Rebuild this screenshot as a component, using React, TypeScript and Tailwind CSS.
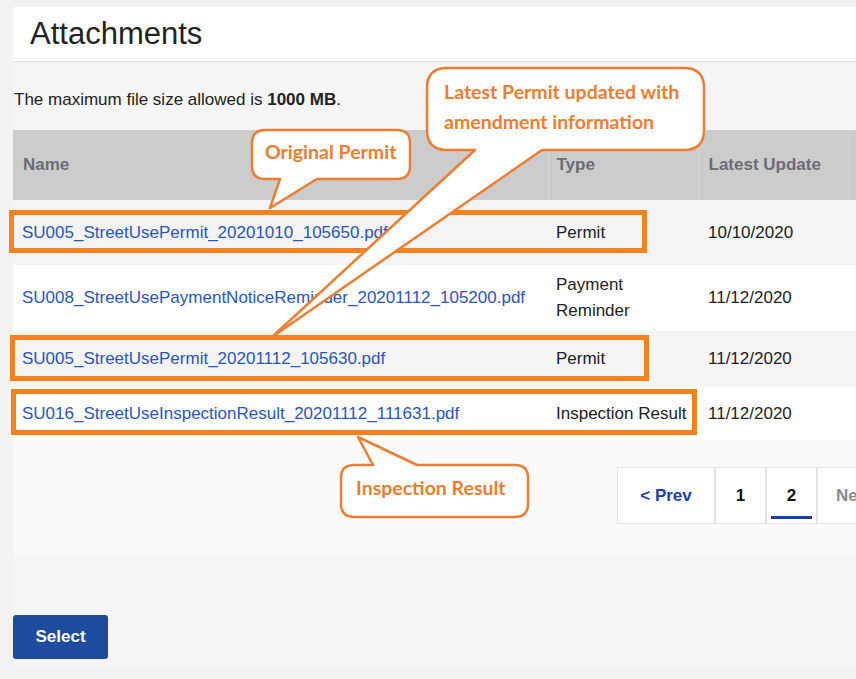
import React from "react";

const ORANGE = "#ED7D31";
const BOX = "#F5821F";

type Row = {
  file: string;
  type: string;
  date: string;
  h: string;
  bg: string;
};

const ROWS: Row[] = [
  {
    file: "SU005_StreetUsePermit_20201010_105650.pdf",
    type: "Permit",
    date: "10/10/2020",
    h: "h-[65px]",
    bg: "bg-[#f4f4f4]",
  },
  {
    file: "SU008_StreetUsePaymentNoticeReminder_20201112_105200.pdf",
    type: "Payment Reminder",
    date: "11/12/2020",
    h: "h-[66px]",
    bg: "bg-white",
  },
  {
    file: "SU005_StreetUsePermit_20201112_105630.pdf",
    type: "Permit",
    date: "11/12/2020",
    h: "h-[56px]",
    bg: "bg-[#f4f4f4]",
  },
  {
    file: "SU016_StreetUseInspectionResult_20201112_111631.pdf",
    type: "Inspection Result",
    date: "11/12/2020",
    h: "h-[53px]",
    bg: "bg-white",
  },
];

// rounded box with a tail cut into the bottom edge
function tailBottom(
  x0: number, y0: number, x1: number, y1: number, r: number,
  b1: number, b2: number, ax: number, ay: number
) {
  return `M${x0 + r},${y0} H${x1 - r} Q${x1},${y0} ${x1},${y0 + r} V${y1 - r} Q${x1},${y1} ${x1 - r},${y1} H${b2} L${ax},${ay} L${b1},${y1} H${x0 + r} Q${x0},${y1} ${x0},${y1 - r} V${y0 + r} Q${x0},${y0} ${x0 + r},${y0} Z`;
}

// same, tail on the top edge
function tailTop(
  x0: number, y0: number, x1: number, y1: number, r: number,
  b1: number, b2: number, ax: number, ay: number
) {
  return `M${x0 + r},${y0} H${b1} L${ax},${ay} L${b2},${y0} H${x1 - r} Q${x1},${y0} ${x1},${y0 + r} V${y1 - r} Q${x1},${y1} ${x1 - r},${y1} H${x0 + r} Q${x0},${y1} ${x0},${y1 - r} V${y0 + r} Q${x0},${y0} ${x0 + r},${y0} Z`;
}

function Annotations() {
  const label = {
    fontFamily: "Lato, 'Open Sans', sans-serif",
    fontWeight: 700,
    fontSize: 19.5,
    fill: ORANGE,
  } as const;

  return (
    <svg
      className="pointer-events-none absolute left-0 top-0"
      width={856}
      height={679}
      viewBox="0 0 856 679"
    >
      <g fill="none" stroke={BOX} strokeWidth={5}>
        <rect x={11.5} y={212.5} width={633} height={38} />
        <rect x={12.5} y={337.5} width={634} height={41} />
        <rect x={13.5} y={391.5} width={681} height={41} />
      </g>

      <g fill="#fff" stroke={ORANGE} strokeWidth={2.5} strokeLinejoin="round">
        <path d={tailBottom(252, 130, 410, 179, 13, 280, 317, 270, 208)} />
        <path d={tailBottom(427, 68, 704, 150, 20, 475, 542, 272, 337)} />
        <path d={tailTop(341, 465, 528, 517, 13, 373, 417, 358, 437)} />
      </g>

      <text x={265} y={159} {...label}>Original Permit</text>
      <text x={444} y={99} {...label}>Latest Permit updated with</text>
      <text x={444} y={129} {...label}>amendment information</text>
      <text x={356} y={495} {...label}>Inspection Result</text>
    </svg>
  );
}

export default function App() {
  return (
    <div className="relative h-[679px] w-full overflow-hidden bg-[#f2f2f2] font-['Liberation_Sans',Arial,sans-serif] text-[17px] text-[#222]">
      <div className="ml-[13px] w-[1000px] pt-[7px]">
        <div className="flex h-[55px] items-center border-b border-[#e2e2e2] bg-white pl-[17px] text-[31px] text-[#222]">
          Attachments
        </div>

        <div className="bg-[#f5f5f5]">
          <p className="flex h-[68px] items-center pl-[1px] pt-[8px]">
            The maximum file size allowed is&nbsp;<b>1000 MB</b>.
          </p>

          <table className="w-[1000px] table-fixed border-collapse">
            <colgroup>
              <col className="w-[535px]" />
              <col className="w-[150px]" />
              <col className="w-[151px]" />
              <col />
            </colgroup>
            <thead>
              <tr className="h-[70px] bg-[#cccccc] text-left font-bold text-[#686d76]">
                <th className="pl-[10px]">Name</th>
                <th className="border-l border-[#d8d8d8] pl-2">Type</th>
                <th className="border-l border-[#d8d8d8] pl-[10px]">Latest Update</th>
                <th className="border-l border-[#d8d8d8] pl-[10px]"></th>
              </tr>
            </thead>
            <tbody>
              {ROWS.map((r) => (
                <tr key={r.file} className={`${r.h} ${r.bg}`}>
                  <td className="pl-[9px]">
                    <a href="#" className="text-[#2a55c4]">
                      {r.file}
                    </a>
                  </td>
                  <td className="pl-2 pr-1 leading-[26px]">{r.type}</td>
                  <td className="pl-[10px]">{r.date}</td>
                  <td></td>
                </tr>
              ))}
            </tbody>
          </table>

          <div className="flex h-[115px] items-start bg-[#fafafa] pl-[604px] pt-[27px]">
            <div className="flex h-[57px] border border-[#e3e3e3] bg-white font-bold">
              <a href="#" className="flex w-[96px] items-center justify-center text-[#1c3fae]">
                &lt; Prev
              </a>
              <a href="#" className="flex w-[51px] items-center justify-center border-l-2 border-[#e3e3e3] text-[#111]">
                1
              </a>
              <span className="relative flex w-[51px] items-center justify-center border-l-2 border-[#e3e3e3] text-[#111]">
                2
                <span className="absolute bottom-[4px] left-[4px] h-[3px] w-[41px] bg-[#1c3fae]" />
              </span>
              <span className="flex w-[70px] items-center border-l-2 border-[#e3e3e3] pl-[18px] text-[#8a8a8a]">
                Next
              </span>
            </div>
          </div>

          <div className="h-[113px] pt-[60px]">
            <button className="h-[44px] w-[95px] rounded-[3px] bg-[#1d4b9d] font-bold text-white">
              Select
            </button>
          </div>
        </div>
      </div>

      <Annotations />
    </div>
  );
}
